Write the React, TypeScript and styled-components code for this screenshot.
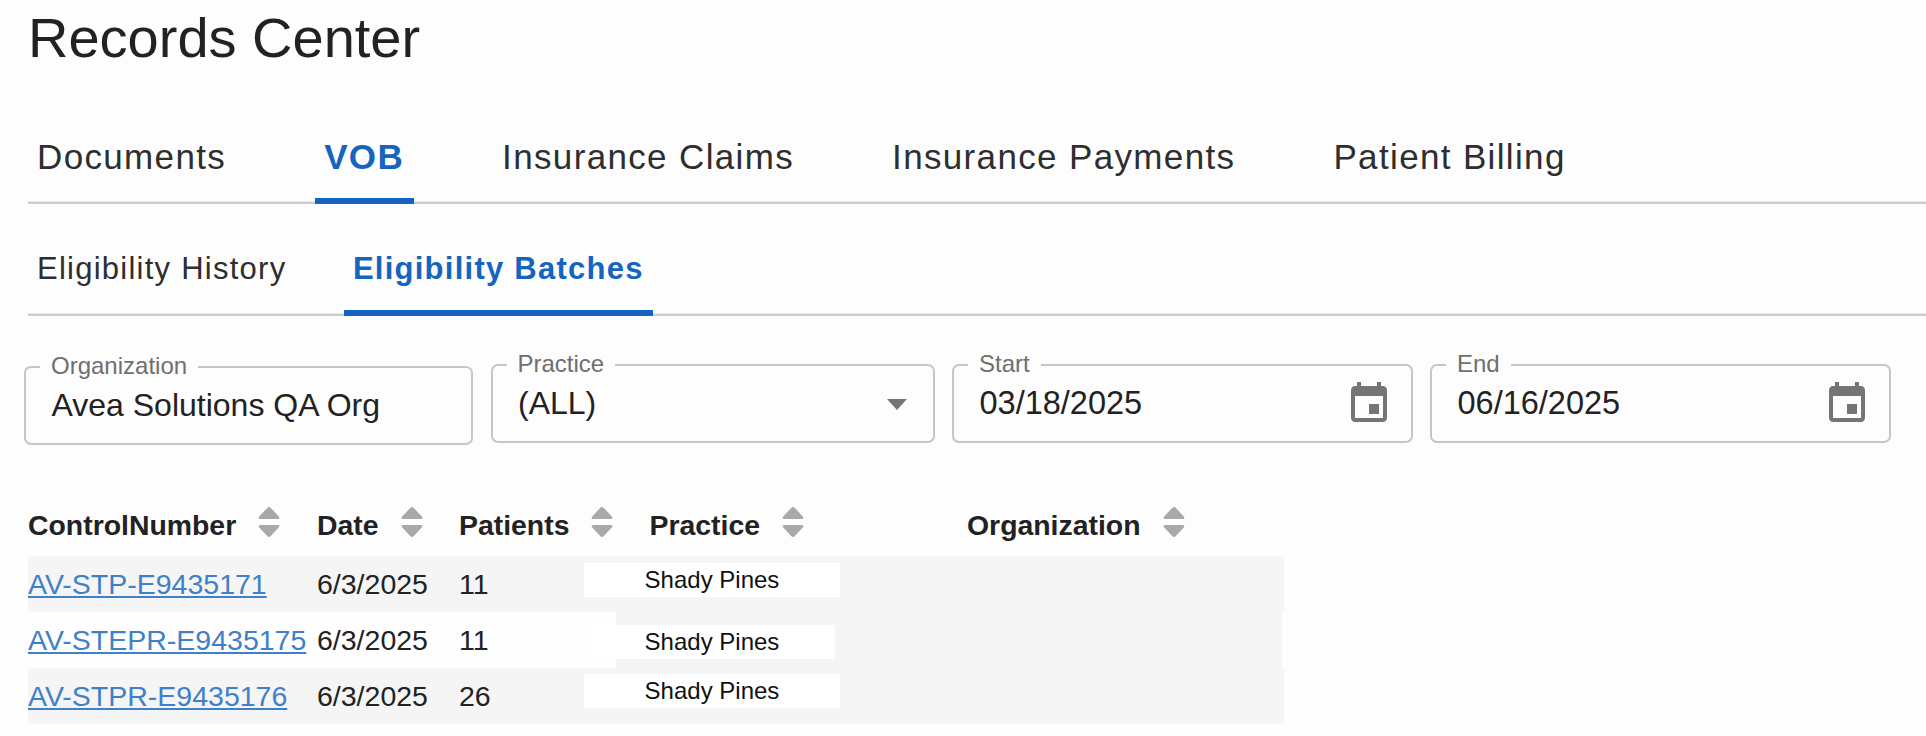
import React from "react";
import styled, { createGlobalStyle } from "styled-components";

const Global = createGlobalStyle`
  html, body { margin: 0; padding: 0; background: #fdfdfd; height: 100%; overflow: hidden; }
  body { font-family: "Liberation Sans", Arial, sans-serif; color: #222; }
`;

const Page = styled.main`
  padding-left: 28px;
`;

const Title = styled.h1`
  margin: 7px 0 0;
  font-size: 56px;
  line-height: 62px;
  font-weight: 400;
  color: #222;
`;

const TabStrip = styled.nav<{ $gap: number; $top: number }>`
  display: flex;
  gap: ${(p) => p.$gap}px;
  margin-top: ${(p) => p.$top}px;
  box-shadow: inset 0 -2.5px 0 #c9cfcf;
`;

const Tab = styled.div<{ $active?: boolean; $size: number; $spacing: number }>`
  padding: 1px 9.5px 21px 9px;
  font-size: ${(p) => p.$size}px;
  letter-spacing: ${(p) => p.$spacing}px;
  line-height: 40px;
  font-weight: ${(p) => (p.$active ? 700 : 400)};
  color: ${(p) => (p.$active ? "#1565c0" : "#2e2e2e")};
  border-bottom: 6px solid ${(p) => (p.$active ? "#1565c0" : "transparent")};
`;

const Filters = styled.section`
  display: grid;
  grid-template-columns: 449px 444px 460.5px 461px;
  gap: 17.5px;
  margin: 48px 0 0 -4px;
`;

const Field = styled.div<{ $offset?: number }>`
  position: relative;
  box-sizing: border-box;
  height: 79px;
  margin-top: ${(p) => p.$offset ?? 0}px;
  padding: 0 18px 0 25.5px;
  display: flex;
  align-items: center;
  justify-content: space-between;
  border: 2.5px solid #c6c6c6;
  border-radius: 7px;
`;

const FieldLabel = styled.label`
  position: absolute;
  top: -14.5px;
  left: 14px;
  padding: 0 11px;
  font-size: 24px;
  line-height: 24px;
  color: #6f6f6f;
  background: #fdfdfd;
`;

const FieldValue = styled.span<{ $size?: number }>`
  font-size: ${(p) => p.$size ?? 32}px;
  color: #222;
`;

const SelectArrow = styled.svg`
  width: 20px;
  height: 11px;
  margin: 2px 7.5px 0 0;
  fill: #757575;
`;

const CalendarIcon = styled.svg`
  width: 48px;
  height: 48px;
  fill: #757575;
`;

const HeaderRow = styled.div`
  display: grid;
  grid-template-columns: 289px 142px 190.5px 317.5px 1fr;
  margin-top: 62px;
  height: 49px;
`;

const HeaderCell = styled.div`
  display: flex;
  align-items: flex-start;
  gap: 22px;
`;

const HeaderText = styled.span`
  margin-top: 3px;
  font-size: 28.4px;
  line-height: 30px;
  font-weight: 700;
  color: #222;
`;

const SortIcon = styled.svg`
  width: 22px;
  height: 30px;
  fill: #a9a9a9;
`;

const Row = styled.div<{ $plain?: boolean }>`
  display: grid;
  grid-template-columns: 289px 142px 125px 256px;
  width: ${(p) => (p.$plain ? 1254 : 1256)}px;
  height: 56px;
  font-size: 28.5px;
  line-height: 57px;
  color: #222;
  background: ${(p) =>
    p.$plain
      ? "linear-gradient(to right, #fefefe 588px, #f5f5f5 588px)"
      : "#f5f5f5"};
`;

const RecordLink = styled.a`
  color: #3f80c8;
  text-decoration: underline;
  white-space: nowrap;
`;

const Patch = styled.div<{ $top: number; $inset?: number }>`
  margin: ${(p) => p.$top}px ${(p) => p.$inset ?? 0}px 0;
  height: 34px;
  font-size: 24px;
  line-height: 34px;
  text-align: center;
  color: #111;
  background: #fff;
`;

const columns = ["ControlNumber", "Date", "Patients", "Practice", "Organization"];

const rows = [
  { id: "AV-STP-E9435171", date: "6/3/2025", patients: "11", top: 7 },
  { id: "AV-STEPR-E9435175", date: "6/3/2025", patients: "11", top: 13, inset: 5, plain: true },
  { id: "AV-STPR-E9435176", date: "6/3/2025", patients: "26", top: 6 },
];

const Calendar = () => (
  <CalendarIcon viewBox="0 0 24 24">
    <path d="M17 12h-5v5h5v-5zM16 1v2H8V1H6v2H5c-1.11 0-1.99.9-1.99 2L3 19c0 1.1.89 2 2 2h14c1.1 0 2-.9 2-2V5c0-1.1-.9-2-2-2h-1V1h-2zm3 18H5V8h14v11z" />
  </CalendarIcon>
);

const Sort = () => (
  <SortIcon viewBox="0 0 22 30">
    <path d="M11 0c.7 0 1.3.3 1.8.9l8 8.6c1.1 1.2.5 2.5-1 2.5H2.2c-1.5 0-2.1-1.3-1-2.5l8-8.6C9.7.3 10.3 0 11 0z" />
    <path d="M11 30c.7 0 1.3-.3 1.8-.9l8-8.6c1.1-1.2.5-2.5-1-2.5H2.2c-1.5 0-2.1 1.3-1 2.5l8 8.6c.5.6 1.1.9 1.8.9z" />
  </SortIcon>
);

export default function App() {
  return (
    <Page>
      <Global />
      <Title>Records Center</Title>
      <TabStrip $gap={79.5} $top={67}>
        <Tab $size={35} $spacing={1.35}>Documents</Tab>
        <Tab $size={35} $spacing={1.35} $active>VOB</Tab>
        <Tab $size={35} $spacing={1.35}>Insurance Claims</Tab>
        <Tab $size={35} $spacing={1.35}>Insurance Payments</Tab>
        <Tab $size={35} $spacing={1.35}>Patient Billing</Tab>
      </TabStrip>
      <TabStrip $gap={48} $top={44}>
        <Tab $size={31} $spacing={1.25}>Eligibility History</Tab>
        <Tab $size={31} $spacing={1.25} $active>Eligibility Batches</Tab>
      </TabStrip>
      <Filters>
        <Field $offset={2}>
          <FieldLabel>Organization</FieldLabel>
          <FieldValue>Avea Solutions QA Org</FieldValue>
        </Field>
        <Field>
          <FieldLabel>Practice</FieldLabel>
          <FieldValue>(ALL)</FieldValue>
          <SelectArrow viewBox="0 0 20 11"><path d="M0 0h20L10 11z" /></SelectArrow>
        </Field>
        <Field>
          <FieldLabel>Start</FieldLabel>
          <FieldValue $size={32.5}>03/18/2025</FieldValue>
          <Calendar />
        </Field>
        <Field>
          <FieldLabel>End</FieldLabel>
          <FieldValue $size={32.5}>06/16/2025</FieldValue>
          <Calendar />
        </Field>
      </Filters>
      <HeaderRow>
        {columns.map((c) => (
          <HeaderCell key={c}>
            <HeaderText>{c}</HeaderText>
            <Sort />
          </HeaderCell>
        ))}
      </HeaderRow>
      {rows.map((r) => (
        <Row key={r.id} $plain={r.plain}>
          <RecordLink href="#">{r.id}</RecordLink>
          <span>{r.date}</span>
          <span>{r.patients}</span>
          <Patch $top={r.top} $inset={r.inset}>Shady Pines</Patch>
        </Row>
      ))}
    </Page>
  );
}
